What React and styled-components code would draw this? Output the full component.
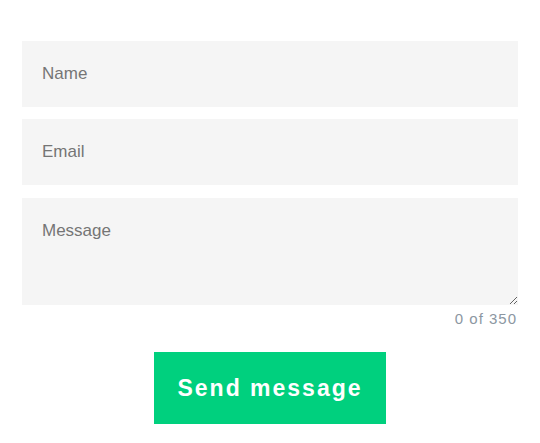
import React, { useState } from "react";
import styled, { createGlobalStyle } from "styled-components";

const Global = createGlobalStyle`
  body { margin: 0; background: #fff; font-family: "Liberation Sans", Arial, sans-serif; }
  * { box-sizing: border-box; }
`;

const Form = styled.form`
  display: flex;
  flex-direction: column;
  padding: 41px 22px 0;
  width: 540px;
`;

const Field = styled.input`
  display: block;
  width: 100%;
  height: 66px;
  margin-bottom: 12px;
  padding: 0 20px;
  border: none;
  outline: none;
  background: #f5f5f5;
  font-family: "Liberation Sans", Arial, sans-serif;
  font-size: 17px;
  color: #333;
  &::placeholder { color: #757575; }
`;

const Area = styled.textarea`
  display: block;
  width: 100%;
  height: 107px;
  margin-top: 1px;
  padding: 23px 20px 20px;
  border: none;
  outline: none;
  background: #f5f5f5;
  font-family: "Liberation Sans", Arial, sans-serif;
  font-size: 17px;
  line-height: 20px;
  color: #333;
  &::placeholder { color: #757575; }
`;

const Counter = styled.div`
  text-align: right;
  padding-right: 1px;
  margin-top: 6px;
  font-size: 15px;
  letter-spacing: 1px;
  color: #8c97a2;
  line-height: 16px;
`;

const ButtonRow = styled.div`
  display: flex;
  justify-content: center;
  margin-top: 25px;
`;

const SendButton = styled.button`
  width: 232px;
  height: 72px;
  border: none;
  background: #00d07e;
  color: #fff;
  font-family: "Liberation Sans", Arial, sans-serif;
  font-weight: bold;
  font-size: 23px;
  letter-spacing: 2px;
  cursor: pointer;
`;

export default function App() {
  const [msg, setMsg] = useState("");
  return (
    <>
      <Global />
      <Form onSubmit={(e) => e.preventDefault()}>
        <Field placeholder="Name" />
        <Field placeholder="Email" />
        <Area placeholder="Message" value={msg} maxLength={350} onChange={(e) => setMsg(e.target.value)} />
        <Counter>{msg.length} of 350</Counter>
        <ButtonRow>
          <SendButton type="submit">Send message</SendButton>
        </ButtonRow>
      </Form>
    </>
  );
}
